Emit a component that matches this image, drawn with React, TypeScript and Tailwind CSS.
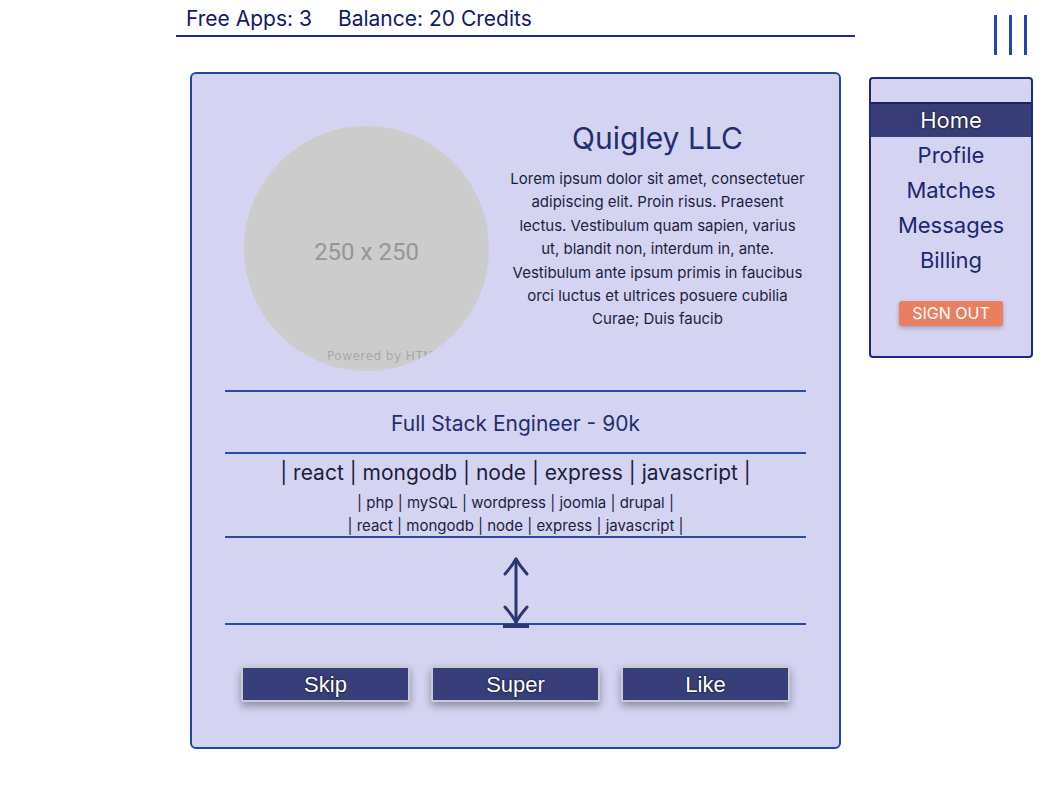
import React from "react";

const tags1 = "| react | mongodb | node | express | javascript |";
const tags2 = "| php | mySQL | wordpress | joomla | drupal |";

const Arrow = () => (
  <svg width="26" height="72" viewBox="0 0 26 72" className="block">
    <g fill="none" stroke="#2d3673" strokeWidth="3" strokeLinecap="round" strokeLinejoin="round">
      <path d="M13 2 L13 66" />
      <path d="M2 17 Q9 9 13 2 Q17 9 24 17" />
      <path d="M2 50 Q9 58 13 65 Q17 58 24 50" />
    </g>
    <rect x="0" y="67" width="26" height="4" fill="#2d3673" />
  </svg>
);

const Hr = () => <div className="h-[2px] bg-[#2a4aa8]" />;

export default function App() {
  return (
    <div className="w-[1050px] h-[800px] bg-white flex font-['Inter',sans-serif]">
      {/* Left: header + card */}
      <div className="ml-[176px] w-[679px]">
        <div className="h-[37px] border-b-2 border-[#1b2a9c] flex items-center pl-[10px] pt-[2px] gap-[26px] text-[21px] text-[#111a68]">
          <span>Free Apps: 3</span>
          <span>Balance: 20 Credits</span>
        </div>

        <div className="mx-[14px] mt-[35px] h-[677px] border-2 border-[#1f45ab] rounded-[6px] bg-[#d4d4f2] px-[33px] pt-[52px]">
          {/* Profile top */}
          <div className="flex h-[244px]">
            <div className="ml-[19px] w-[245px] h-[245px] rounded-full bg-[#cccccc] overflow-hidden relative flex items-center justify-center shrink-0">
              <span className="text-[24px] text-[#969696] font-['Roboto',sans-serif] mt-[6px]">250 x 250</span>
              <span className="absolute left-[83px] top-[221px] text-[12px] tracking-[0.5px] text-[#a8a8a8] font-['DejaVu_Sans',sans-serif] whitespace-nowrap">
                Powered by HTML.COM
              </span>
            </div>
            <div className="ml-[20px] w-[297px] -mt-[5px] text-center">
              <div className="text-[30px] leading-[34px] text-[#232d70]">Quigley LLC</div>
              <p className="mt-[12px] text-[15px] leading-[23.4px] text-[#1c1d3e]">
                Lorem ipsum dolor sit amet, consectetuer adipiscing elit. Proin risus. Praesent lectus. Vestibulum
                quam sapien, varius ut, blandit non, interdum in, ante. Vestibulum ante ipsum primis in faucibus orci
                luctus et ultrices posuere cubilia Curae; Duis faucib
              </p>
            </div>
          </div>

          <div className="mt-[20px]">
            <Hr />
          </div>
          <div className="h-[60px] flex items-center justify-center pt-[4px] text-[21px] text-[#232d70]">
            Full Stack Engineer - 90k
          </div>
          <Hr />
          <div className="h-[82px] flex flex-col items-center pt-[4px] text-[#1c1d3e]">
            <div className="text-[21px] leading-[30px]">{tags1}</div>
            <div className="text-[15px] leading-[23px] mt-[3px]">{tags2}</div>
            <div className="text-[15px] leading-[23px]">{tags1}</div>
          </div>
          <Hr />
          <div className="h-[85px] flex justify-center items-end">
            <div className="mb-[-6px] relative z-10">
              <Arrow />
            </div>
          </div>
          <Hr />

          {/* Actions */}
          <div className="mt-[41px] flex justify-center gap-[21px]">
            {["Skip", "Super", "Like"].map((t) => (
              <button
                key={t}
                className="w-[169px] h-[36px] bg-[#383e79] border-2 border-[#c9c9d6] rounded-[2px] shadow-[0_4px_8px_rgba(0,0,0,0.35)] text-white text-[22px] font-['Liberation_Sans',sans-serif] [text-shadow:0_0_2px_#000]"
              >
                {t}
              </button>
            ))}
          </div>
        </div>
      </div>

      {/* Right: hamburger + nav */}
      <div className="ml-[14px] w-[164px]">
        <div className="h-[77px] pt-[15px] flex justify-end pr-[6px] gap-[12px]">
          <div className="w-[3px] h-[40px] bg-[#1f45b5]" />
          <div className="w-[3px] h-[40px] bg-[#1f45b5]" />
          <div className="w-[3px] h-[40px] bg-[#1f45b5]" />
        </div>
        <div className="h-[281px] border-2 border-[#1e2a80] rounded-[4px] bg-[#d4d4f2] pt-[23px] text-center text-[22px] text-[#1d2670]">
          <div className="h-[35px] leading-[33px] bg-[#383d78] border-t-2 border-[#1c2160] text-white [text-shadow:0_0_2px_#000]">
            Home
          </div>
          {["Profile", "Matches", "Messages", "Billing"].map((t) => (
            <div key={t} className="h-[35px] leading-[37px]">
              {t}
            </div>
          ))}
          <div className="mt-[24px] flex justify-center">
            <div className="w-[104px] h-[25px] bg-[#e8805f] rounded-[3px] shadow-[0_2px_4px_rgba(0,0,0,0.25)] text-white text-[16px] leading-[25px]">
              SIGN OUT
            </div>
          </div>
        </div>
      </div>
    </div>
  );
}
